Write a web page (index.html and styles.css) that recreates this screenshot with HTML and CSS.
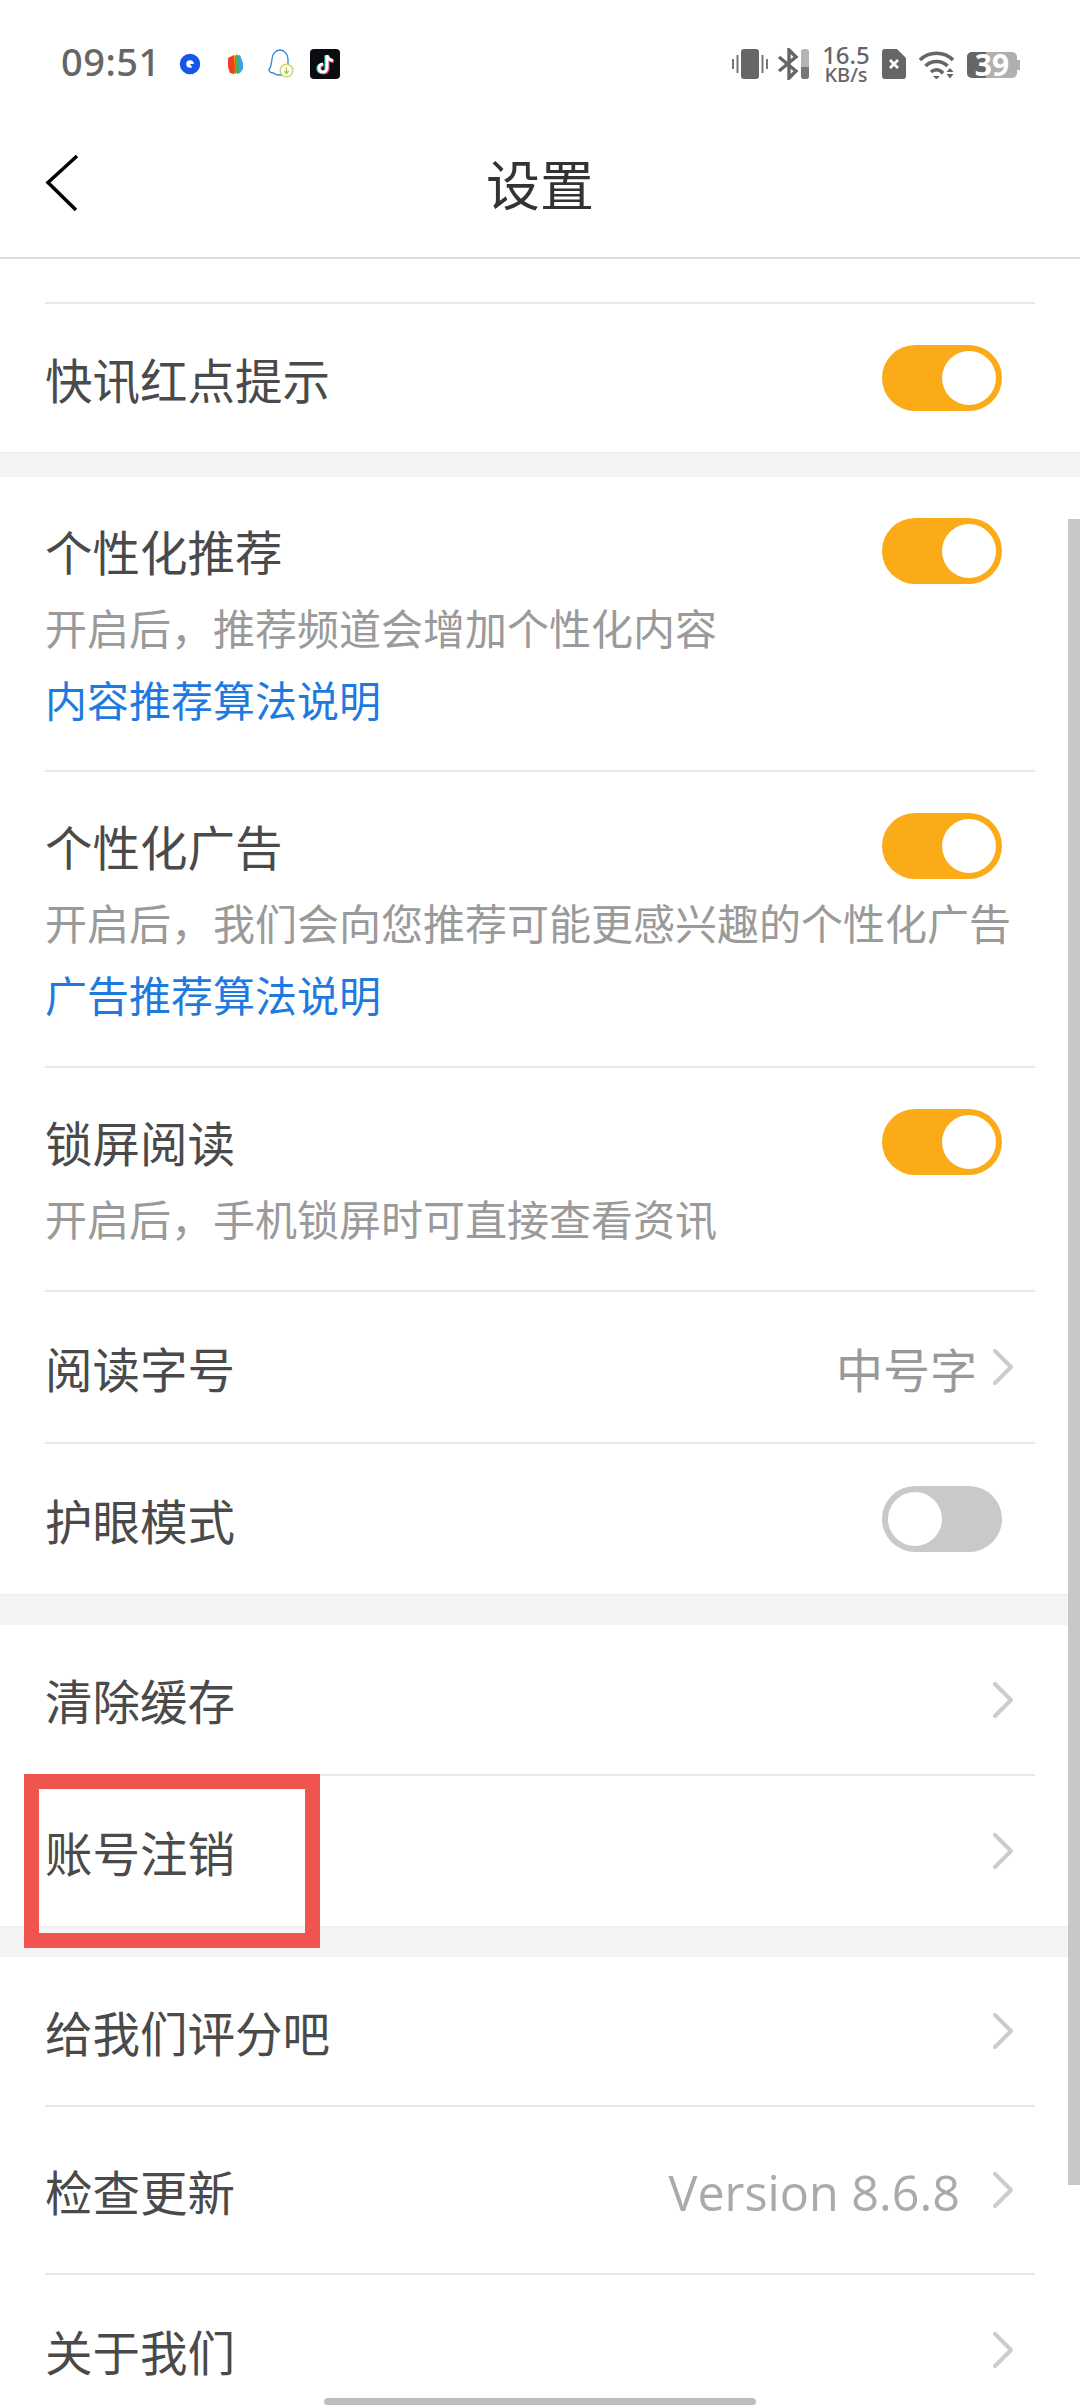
FILE: index.html
```html
<!DOCTYPE html>
<html lang="zh-CN">
<head>
  <meta charset="utf-8">
  <meta name="viewport" content="width=device-width, initial-scale=1.0">
  <title>设置</title>
  <link rel="stylesheet" href="styles.css">
</head>
<body>
  <div class="screen">

    <!-- Status bar -->
    <div class="status-bar">
      <div class="status-left">
        <span class="time">09:51</span>
        <svg class="app-icon icon-browser" viewBox="0 0 22 22">
          <circle cx="11" cy="11" r="7" fill="none" stroke="#1558e8" stroke-width="6.5"/>
          <path d="M11 11h6v3h-4z" fill="#1558e8"/>
        </svg>
        <svg class="app-icon icon-book" viewBox="0 0 18 22">
          <path d="M7 3l5-2 2 18-6 2z" fill="#f5b400"/>
          <path d="M11 3l3-1 3 8 0 6-3 4-3 1z" fill="#3f9fe0"/>
          <path d="M9 3l3-1 1 16-4 3z" fill="#4cb050"/>
          <path d="M2 5l6-3 1 15-1 4-4-1-2-6z" fill="#ee3f22"/>
        </svg>
        <svg class="app-icon icon-qq" viewBox="0 0 26 30">
          <path d="M6 24c-3 0-5-1-5-3 0-1 2-3 2-5 0-2 1-3 1-6 0-5 4-9 8-9s8 4 8 9v6M6 24c1 2 4 2 6 2h3" fill="none" stroke="#2b7cd3" stroke-width="1.3"/>
          <circle cx="18.5" cy="21.5" r="6.3" fill="#fff" stroke="#c8d96a" stroke-width="1.5"/>
          <path d="M18.5 18v6M16.3 22l2.2 2.5 2.2-2.5" fill="none" stroke="#a8c84a" stroke-width="1.2"/>
        </svg>
        <svg class="app-icon icon-tiktok" viewBox="0 0 30 30">
          <rect width="30" height="30" rx="4" fill="#0b0b12"/>
          <path d="M17 6v13a4 4 0 1 1-4-4M17 6c.5 3 2.500 5 6 5.500" fill="none" stroke="#25d8e0" stroke-width="3.200" transform="translate(-1 .5)"/>
          <path d="M17 6v13a4 4 0 1 1-4-4M17 6c.5 3 2.500 5 6 5.500" fill="none" stroke="#f0305a" stroke-width="3.200" transform="translate(1 1)"/>
          <path d="M17 6v13a4 4 0 1 1-4-4M17 6c.5 3 2.500 5 6 5.500" fill="none" stroke="#fff" stroke-width="3"/>
        </svg>
      </div>
      <div class="status-right">
        <svg class="sys-icon icon-vibrate" viewBox="0 0 36 30">
          <rect x="9" y="0" width="18" height="30" rx="3" fill="#666"/>
          <path d="M5.500 6v18M1 10v10M30.500 6v18M35 10v10" stroke="#777" stroke-width="2" fill="none"/>
        </svg>
        <svg class="sys-icon icon-bt" viewBox="0 0 32 32">
          <path d="M2 9l17 14-7 7V2l7 7L2 23" fill="none" stroke="#666" stroke-width="3.400"/>
          <rect x="24" y="1" width="8" height="30" rx="3" fill="#b4b4b4"/>
          <path d="M24 19h8v9a3 3 0 0 1-3 3h-2a3 3 0 0 1-3-3z" fill="#777"/>
        </svg>
        <div class="net-speed">
          <span class="net-num">16.5</span>
          <span class="net-unit">KB/s</span>
        </div>
        <svg class="sys-icon icon-sim" viewBox="0 0 24 30">
          <path d="M3 0h12l9 9v18a3 3 0 0 1-3 3H3a3 3 0 0 1-3-3V3a3 3 0 0 1 3-3z" fill="#666"/>
          <path d="M8 11l8 8M16 11l-8 8" stroke="#fff" stroke-width="2.600"/>
        </svg>
        <svg class="sys-icon icon-wifi" viewBox="0 0 37 28">
          <path d="M2 9c9-9 24-9 33 0" fill="none" stroke="#666" stroke-width="3.600"/>
          <path d="M7.500 15c6-6 16-6 22 0" fill="none" stroke="#666" stroke-width="3.600"/>
          <path d="M13 21c3-3 8-3 11 0l-1.500 1.500" fill="none" stroke="#666" stroke-width="3.300"/>
          <path d="M15 25h7l-3.500 3.500z" fill="#666"/>
          <path d="M32 17l3.500 4h-7zM28.500 23h7L32 27.500z" fill="#666"/>
        </svg>
        <div class="battery">
          <div class="battery-body">
            <div class="battery-fill"></div>
            <span class="battery-num">39</span>
          </div>
          <div class="battery-cap"></div>
        </div>
      </div>
    </div>

    <!-- Title bar -->
    <div class="nav-bar">
      <svg class="back" viewBox="0 0 34 58">
        <path d="M32 2L3 28.500 31 56" fill="none" stroke="#000" stroke-width="3.500"/>
      </svg>
      <h1 class="nav-title">设置</h1>
    </div>

    <div class="settings">
      <div class="group group-first">
        <div class="row row-flash">
          <span class="row-title">快讯红点提示</span>
          <span class="switch on"><i></i></span>
        </div>
      </div>

      <div class="group">
        <div class="row row-tall row-recommend">
          <div class="row-text">
            <div class="row-title">个性化推荐</div>
            <div class="row-sub">开启后，推荐频道会增加个性化内容</div>
            <div class="row-link">内容推荐算法说明</div>
          </div>
          <span class="switch on"><i></i></span>
        </div>
        <div class="row row-tall row-ads">
          <div class="row-text">
            <div class="row-title">个性化广告</div>
            <div class="row-sub">开启后，我们会向您推荐可能更感兴趣的个性化广告</div>
            <div class="row-link">广告推荐算法说明</div>
          </div>
          <span class="switch on"><i></i></span>
        </div>
        <div class="row row-tall row-lock">
          <div class="row-text">
            <div class="row-title">锁屏阅读</div>
            <div class="row-sub">开启后，手机锁屏时可直接查看资讯</div>
          </div>
          <span class="switch on"><i></i></span>
        </div>
        <div class="row row-font">
          <span class="row-title">阅读字号</span>
          <span class="row-value">中号字<svg class="chevron" viewBox="0 0 20 36"><path d="M2 2l16 16L2 34"/></svg></span>
        </div>
        <div class="row row-last row-eye">
          <span class="row-title">护眼模式</span>
          <span class="switch"><i></i></span>
        </div>
      </div>

      <div class="group">
        <div class="row row-clear">
          <span class="row-title">清除缓存</span>
          <svg class="chevron" viewBox="0 0 20 36"><path d="M2 2l16 16L2 34"/></svg>
        </div>
        <div class="row row-last">
          <span class="row-title">账号注销</span>
          <svg class="chevron" viewBox="0 0 20 36"><path d="M2 2l16 16L2 34"/></svg>
        </div>
      </div>

      <div class="group">
        <div class="row">
          <span class="row-title">给我们评分吧</span>
          <svg class="chevron" viewBox="0 0 20 36"><path d="M2 2l16 16L2 34"/></svg>
        </div>
        <div class="row row-update">
          <span class="row-title">检查更新</span>
          <span class="row-value version"><span class="version-num">Version 8.6.8</span><svg class="chevron" viewBox="0 0 20 36"><path d="M2 2l16 16L2 34"/></svg></span>
        </div>
        <div class="row row-last">
          <span class="row-title">关于我们</span>
          <svg class="chevron" viewBox="0 0 20 36"><path d="M2 2l16 16L2 34"/></svg>
        </div>
      </div>
    </div>

    <!-- Overlays -->
    <div class="scrollbar"></div>
    <div class="mark"></div>
    <div class="home-bar"></div>
  </div>
</body>
</html>
```
FILE: styles.css
```css
* {
  box-sizing: border-box;
}

body {
  margin: 0;
  background: #fff;
  font-family: "Noto Sans CJK SC", "Noto Sans", sans-serif;
}

.screen {
  position: relative;
  width: 1080px;
  height: 2408px;
  overflow: hidden;
  background: #fff;
}

/* status bar */
.status-bar {
  height: 98px;
  padding: 30px 60px 0 61px;
  display: flex;
  justify-content: space-between;
  align-items: flex-start;
}

.status-left,
.status-right {
  display: flex;
  align-items: flex-start;
}

.time {
  font-family: "Noto Sans", sans-serif;
  font-size: 38px;
  font-weight: 500;
  line-height: 50px;
  letter-spacing: 0.5px;
  color: #666;
  width: 118px;
  margin-top: 6px;
}

.app-icon {
  display: block;
  margin-top: 19px;
}

.icon-browser {
  width: 22px;
  height: 22px;
  margin-top: 23px;
}

.icon-book {
  width: 18px;
  height: 22px;
  margin-top: 23px;
  margin-left: 25px;
}

.icon-qq {
  width: 26px;
  height: 30px;
  margin-left: 24px;
}

.icon-tiktok {
  width: 30px;
  height: 30px;
  margin-left: 16px;
}

.status-right {
  padding-top: 18px;
}

.sys-icon {
  display: block;
}

.icon-vibrate {
  width: 36px;
  height: 30px;
  margin-top: 1px;
}

.icon-bt {
  width: 32px;
  height: 32px;
  margin-left: 9px;
}

.net-speed {
  display: flex;
  flex-direction: column;
  align-items: center;
  gap: 2px;
  width: 46px;
  margin-left: 14px;
  font-family: "Noto Sans", sans-serif;
  font-weight: 500;
  color: #666;
}

.net-num {
  font-size: 24px;
  line-height: 18px;
  margin-top: -2px;
}

.net-unit {
  font-size: 20px;
  line-height: 18px;
}

.icon-sim {
  width: 24px;
  height: 30px;
  margin-left: 13px;
  margin-top: 1px;
}

.icon-wifi {
  width: 37px;
  height: 28px;
  margin-left: 12px;
  margin-top: 3px;
}

.battery {
  display: flex;
  align-items: center;
  margin-left: 12px;
  margin-top: 4px;
}

.battery-body {
  position: relative;
  width: 50px;
  height: 26px;
  border-radius: 5px;
  background: #b0b0b0;
  text-align: center;
}

.battery-fill {
  width: 19px;
  height: 26px;
  border-radius: 5px 0 0 5px;
  background: #666;
}

.battery-num {
  position: absolute;
  left: 0;
  right: 0;
  top: 0;
  font-family: "Noto Sans", sans-serif;
  font-size: 30px;
  font-weight: 700;
  line-height: 26px;
  color: #fff;
}

.battery-cap {
  width: 3px;
  height: 10px;
  background: #b0b0b0;
}

/* title bar */
.nav-bar {
  position: relative;
  height: 161px;
  padding: 10px 0 0;
  border-bottom: 2px solid #dedede;
  display: flex;
  align-items: center;
  justify-content: center;
}

.back {
  position: absolute;
  left: 45px;
  top: 56px;
  width: 34px;
  height: 58px;
}

.nav-title {
  margin: 0;
  font-size: 54px;
  font-weight: 400;
  color: #333;
}

/* list */
.settings {
  background: #f4f4f4;
}

.group {
  background: #fff;
  padding: 0 45px;
  margin-bottom: 30px;
  border-bottom: 1px solid #ececec;
}

.group-first {
  padding-top: 43px;
  margin-bottom: 24px;
}

.row {
  display: flex;
  justify-content: space-between;
  align-items: center;
  height: 150px;
  border-bottom: 2px solid #e8e8e8;
  color: #4a4a4a;
}

.group-first .row {
  border-top: 2px solid #e8e8e8;
  border-bottom: none;
}

.row-last {
  border-bottom: none;
}

.row-title {
  font-size: 47.5px;
  line-height: 65px;
  font-weight: 400;
  color: #4a4a4a;
}

.row-tall {
  height: auto;
  align-items: flex-start;
  padding-top: 41px;
}

.row-text {
  flex: 1;
  min-width: 0;
}

.row-recommend {
  height: 295px;
}

.row-ads {
  height: 296px;
}

.row-lock {
  height: 224px;
}

.row-font {
  height: 152px;
}

.row-eye {
  height: 150px;
}

.row-clear {
  height: 151px;
}

.row-update {
  height: 168px;
}

.row-sub {
  margin-top: 8px;
  font-size: 42px;
  line-height: 72px;
  color: #9a9a9a;
  white-space: nowrap;
}

.row-link {
  font-size: 42px;
  line-height: 72px;
  color: #1f7ae0;
}

.row-value {
  display: flex;
  align-items: center;
  gap: 16px;
  margin-right: 22px;
  font-size: 47px;
  color: #999;
}

.version {
  gap: 33px;
  font-family: "Open Sans", sans-serif;
  font-size: 48.5px;
  color: #aaa;
}

.version-num {
  padding-top: 4px;
}

.chevron {
  display: block;
  width: 20px;
  height: 36px;
  margin-right: 22px;
  flex: none;
}

.row-value .chevron {
  margin-right: 0;
}

.chevron path {
  fill: none;
  stroke: #ccc;
  stroke-width: 4;
  stroke-linecap: round;
  stroke-linejoin: round;
}

/* switch */
.switch {
  flex: none;
  display: flex;
  align-items: center;
  width: 120px;
  height: 66px;
  margin-right: 33px;
  padding: 0 6px;
  border-radius: 33px;
  background: #c9c9c9;
}

.switch i {
  display: block;
  width: 54px;
  height: 54px;
  border-radius: 50%;
  background: #fff;
}

.switch.on {
  justify-content: flex-end;
  background: #fbab18;
}

/* overlays */
.scrollbar {
  position: absolute;
  right: 0;
  top: 519px;
  width: 12px;
  height: 1666px;
  background: #c8c8c8;
}

.mark {
  position: absolute;
  left: 24px;
  top: 1774px;
  width: 296px;
  height: 174px;
  border: 15px solid #f0544e;
}

.home-bar {
  position: absolute;
  left: 324px;
  top: 2398px;
  width: 432px;
  height: 7px;
  border-radius: 4px;
  background: #bebebe;
}
```
